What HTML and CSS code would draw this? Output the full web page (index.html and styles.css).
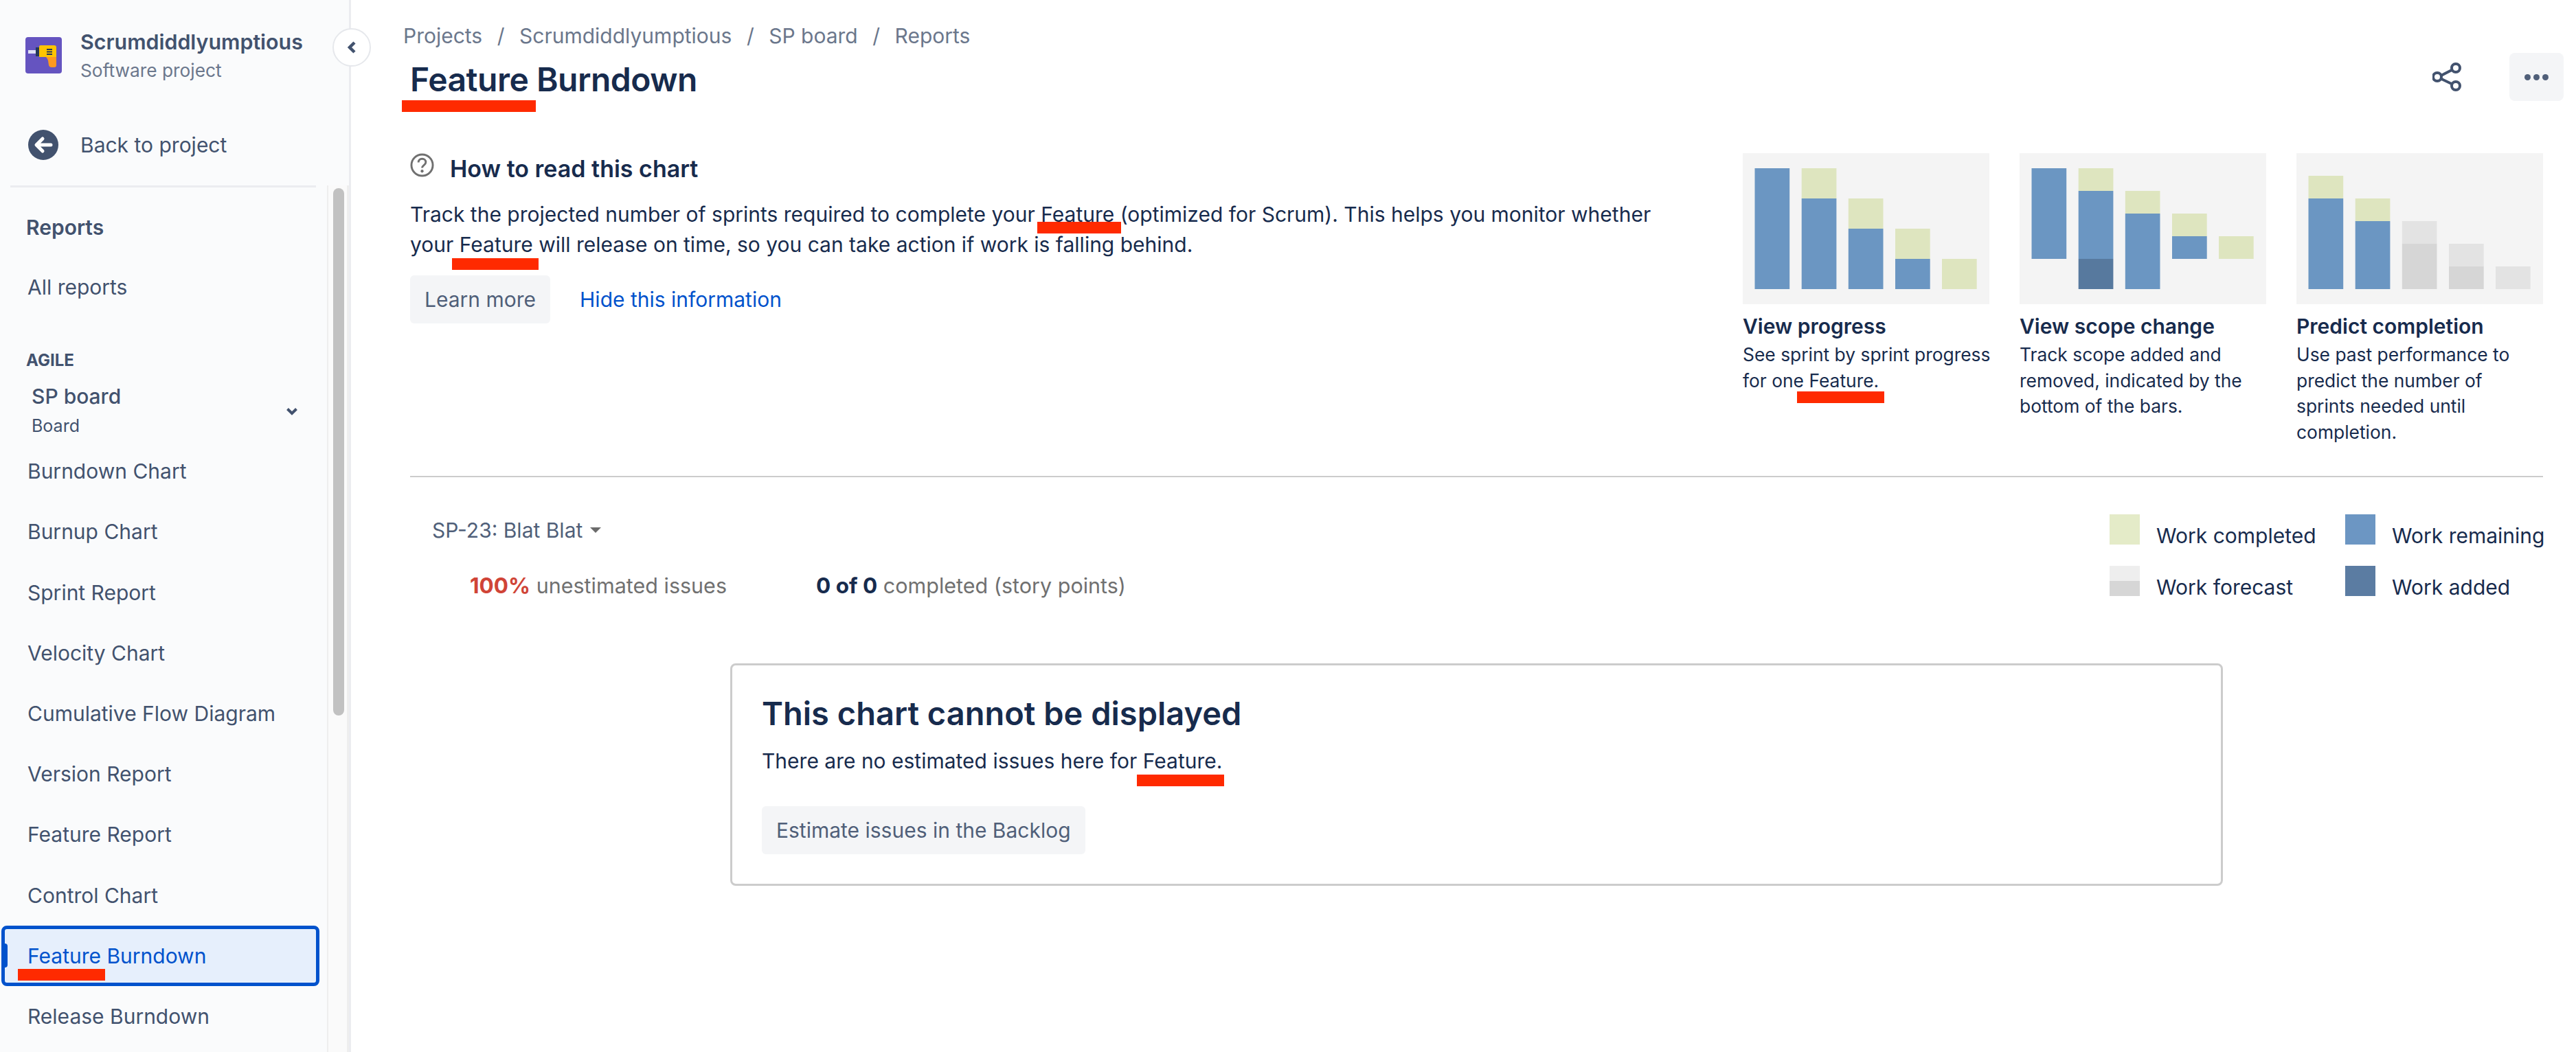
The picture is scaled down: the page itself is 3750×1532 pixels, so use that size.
FILE: index.html
```html
<!DOCTYPE html>
<html lang="en">
<head>
  <meta charset="UTF-8" />
  <title>Feature Burndown</title>
  <link rel="stylesheet" href="styles.css">
</head>
<body>

  <aside class="sidebar">
    <div class="project">
      <svg class="project-logo" viewBox="0 0 53 53">
        <rect width="53" height="53" rx="4" fill="#6554C0"/>
        <rect x="4" y="19" width="11" height="5" fill="#DFE1F5"/>
        <rect x="15" y="15" width="6" height="13" fill="#253858"/>
        <path d="M20 14q0-2 2-2h20q3 0 3 3v14H20z" fill="#FFC400"/>
        <path d="M30 29h15v12q0 3-3 3h-4q-3 0-4-3l-1-7q-1-3-3-5z" fill="#FF991F"/>
        <path d="M31 17h8v2h-8zM31 20.500h8v2h-8zM31 24h8v2h-8z" fill="#253858"/>
      </svg>
      <div>
        <div class="project-name">Scrumdiddlyumptious</div>
        <div class="project-type">Software project</div>
      </div>
    </div>

    <a class="back-link" href="#">
      <svg class="back-icon" viewBox="0 0 44 44">
        <circle cx="22" cy="22" r="22" fill="#42526E"/>
        <path d="M33 22H13M21 13l-9 9 9 9" fill="none" stroke="#fff" stroke-width="5" stroke-linejoin="round" stroke-linecap="round"/>
      </svg>
      Back to project
    </a>

    <div class="nav-wrap">
      <nav class="nav">
        <div class="nav-rule"></div>
        <div class="nav-title">Reports</div>
        <a class="nav-item nav-item-first" href="#">All reports</a>
        <div class="nav-group">AGILE</div>
        <div class="board">
          <div>
            <div class="board-name">SP board</div>
            <div class="board-type">Board</div>
          </div>
          <svg class="board-chevron" viewBox="0 0 18 12">
            <path d="M2.500 2.500L9 9l6.500-6.500" fill="none" stroke="#42526E" stroke-width="4"/>
          </svg>
        </div>
        <a class="nav-item" href="#">Burndown Chart</a>
        <a class="nav-item" href="#">Burnup Chart</a>
        <a class="nav-item" href="#">Sprint Report</a>
        <a class="nav-item" href="#">Velocity Chart</a>
        <a class="nav-item" href="#">Cumulative Flow Diagram</a>
        <a class="nav-item" href="#">Version Report</a>
        <a class="nav-item" href="#">Feature Report</a>
        <a class="nav-item" href="#">Control Chart</a>
        <a class="nav-item active" href="#"><span class="mark mark-nav">Feature</span> Burndown</a>
        <a class="nav-item" href="#">Release Burndown</a>
      </nav>
      <div class="scroll-track"><div class="scroll-thumb"></div></div>
    </div>

    <button class="collapse-button">
      <svg viewBox="0 0 16 20" width="16" height="20">
        <path d="M12 3L5 10l7 7" fill="none" stroke="#42526E" stroke-width="4.500"/>
      </svg>
    </button>
  </aside>

  <main class="main">
    <div class="breadcrumbs">
      <a href="#">Projects</a><span>/</span>
      <a href="#">Scrumdiddlyumptious</a><span>/</span>
      <a href="#">SP board</a><span>/</span>
      <a href="#">Reports</a>
    </div>

    <header class="page-header">
      <h1><span class="mark mark-title">Feature</span> Burndown</h1>
      <div class="actions">
        <button class="icon-button">
          <svg viewBox="0 0 42 42" width="42" height="42">
            <path d="M34 8L8 21.500 34 34" fill="none" stroke="#42526E" stroke-width="4"/>
            <circle cx="34" cy="8" r="6" fill="#fff" stroke="#42526E" stroke-width="4"/>
            <circle cx="7" cy="21" r="6" fill="#fff" stroke="#42526E" stroke-width="4"/>
            <circle cx="34" cy="34" r="6" fill="#fff" stroke="#42526E" stroke-width="4"/>
          </svg>
        </button>
        <button class="more-button"><i></i><i></i><i></i></button>
      </div>
    </header>

    <section class="info">
      <div class="info-text">
        <div class="info-heading">
          <svg class="help-icon" viewBox="0 0 36 36">
            <circle cx="18" cy="18" r="16" fill="none" stroke="#707070" stroke-width="3"/>
            <path d="M12.500 14c0-3.500 2.500-5.500 5.500-5.500s5.500 2 5.500 5c0 4.500-5.500 4.500-5.500 8.500" fill="none" stroke="#707070" stroke-width="3"/>
            <circle cx="18" cy="27" r="2.200" fill="#707070"/>
          </svg>
          <h2>How to read this chart</h2>
        </div>
        <p>Track the projected number of sprints required to complete your <span class="mark mark-para">Feature</span> (optimized for Scrum). This helps you monitor whether your <span class="mark mark-para-second">Feature</span> will release on time, so you can take action if work is falling behind.</p>
        <div class="info-actions">
          <button class="button">Learn more</button>
          <a class="link" href="#">Hide this information</a>
        </div>
      </div>

      <div class="cards">
        <div class="card">
          <svg class="thumb" viewBox="0 0 359 220">
            <g class="bar-blue">
              <rect x="17.500" y="22" width="50.700" height="176"/>
              <rect x="85.700" y="66" width="50.700" height="132"/>
              <rect x="153.800" y="110" width="50.700" height="88"/>
              <rect x="222" y="154" width="50.700" height="44"/>
            </g>
            <g class="bar-green">
              <rect x="85.700" y="22" width="50.700" height="44"/>
              <rect x="153.800" y="66" width="50.700" height="44"/>
              <rect x="222" y="110" width="50.700" height="44"/>
              <rect x="290" y="154" width="50.700" height="44"/>
            </g>
          </svg>
          <h3>View progress</h3>
          <p>See sprint by sprint progress<br>for one <span class="mark mark-card">Feature.</span></p>
        </div>
        <div class="card">
          <svg class="thumb" viewBox="0 0 359 220">
            <g class="bar-blue">
              <rect x="17.500" y="22" width="50.700" height="132"/>
              <rect x="85.700" y="55" width="50.700" height="99"/>
              <rect x="153.800" y="88" width="50.700" height="110"/>
              <rect x="222" y="121" width="50.700" height="33"/>
            </g>
            <g class="bar-green">
              <rect x="85.700" y="22" width="50.700" height="33"/>
              <rect x="153.800" y="55" width="50.700" height="33"/>
              <rect x="222" y="88" width="50.700" height="33"/>
              <rect x="290" y="121" width="50.700" height="33"/>
            </g>
            <rect class="bar-dark" x="85.700" y="154" width="50.700" height="44"/>
          </svg>
          <h3>View scope change</h3>
          <p>Track scope added and<br>removed, indicated by the<br>bottom of the bars.</p>
        </div>
        <div class="card">
          <svg class="thumb" viewBox="0 0 359 220">
            <g class="bar-blue">
              <rect x="17.500" y="66" width="50.700" height="132"/>
              <rect x="85.700" y="99" width="50.700" height="99"/>
            </g>
            <g class="bar-green">
              <rect x="17.500" y="33" width="50.700" height="33"/>
              <rect x="85.700" y="66" width="50.700" height="33"/>
            </g>
            <g class="bar-light">
              <rect x="153.800" y="99" width="50.700" height="33"/>
              <rect x="222" y="132" width="50.700" height="33"/>
              <rect x="290" y="165" width="50.700" height="33"/>
            </g>
            <g class="bar-grey">
              <rect x="153.800" y="132" width="50.700" height="66"/>
              <rect x="222" y="165" width="50.700" height="33"/>
            </g>
          </svg>
          <h3>Predict completion</h3>
          <p>Use past performance to<br>predict the number of<br>sprints needed until<br>completion.</p>
        </div>
      </div>
    </section>

    <hr class="divider">

    <section class="summary">
      <div class="summary-left">
        <div class="epic-select">SP-23: Blat Blat <span class="caret"></span></div>
        <div class="stats">
          <div class="stat"><strong class="stat-red">100%</strong> unestimated issues</div>
          <div class="stat"><strong>0 of 0</strong> completed (story points)</div>
        </div>
      </div>
      <div class="legend">
        <div class="legend-item"><span class="swatch swatch-completed"></span><span class="legend-label">Work completed</span></div>
        <div class="legend-item"><span class="swatch swatch-remaining"></span><span class="legend-label">Work remaining</span></div>
        <div class="legend-item"><span class="swatch swatch-forecast"></span><span class="legend-label">Work forecast</span></div>
        <div class="legend-item"><span class="swatch swatch-added"></span><span class="legend-label">Work added</span></div>
      </div>
    </section>

    <section class="empty-box">
      <h2>This chart cannot be displayed</h2>
      <p>There are no estimated issues here for <span class="mark mark-box">Feature.</span></p>
      <button class="button">Estimate issues in the Backlog</button>
    </section>
  </main>

</body>
</html>
```

FILE: styles.css
```css
* { margin: 0; padding: 0; box-sizing: border-box; }

body {
  font-family: Inter, 'Noto Sans', sans-serif;
  font-size: 30px;
  color: #172B4D;
  background-color: #fff;
  display: flex;
  height: 100vh;
  overflow: hidden;
}

a { text-decoration: none; color: inherit; }

button {
  font-family: inherit;
  border: none;
  cursor: pointer;
}

/* red annotation strokes drawn over the screenshot */
.mark, .mark-para-second { position: relative; }

.mark::after, .mark-para-second::after {
  content: '';
  position: absolute;
  height: 17px;
  background-color: #FF2A00;
}

.mark-nav::after { left: -14px; width: 127px; top: 37px; }
.mark-title::after { left: -12px; width: 195px; top: 60px; }
.mark-para::after { left: -5px; width: 122px; top: 29px; }
.mark-para-second::after { left: -11px; width: 126px; top: 38px; }
.mark-card::after { left: -17px; width: 127px; top: 32px; }
.mark-box::after { left: -9px; width: 127px; top: 38px; }

/* sidebar */
.sidebar {
  position: relative;
  flex: 0 0 511px;
  height: 100%;
  background-color: #FAFBFC;
  border-right: 3px solid #EBECF0;
  display: flex;
  flex-direction: column;
  color: #42526E;
}

.project {
  display: flex;
  align-items: center;
  gap: 27px;
  padding: 41px 0 0 37px;
}

.project-logo {
  width: 53px;
  height: 53px;
  margin-top: -4px;
}

.project-name {
  font-size: 30.4px;
  line-height: 41px;
  font-weight: 600;
}

.project-type {
  font-size: 26.3px;
  line-height: 41px;
  color: #6B778C;
}

.back-link {
  display: flex;
  align-items: center;
  gap: 32px;
  margin-top: 66px;
  padding-left: 41px;
  line-height: 44px;
}

.back-icon { width: 44px; height: 44px; }

.nav-wrap {
  flex: 1;
  display: flex;
  margin-top: 37px;
  min-height: 0;
}

.nav { flex: 0 0 476px; }

.nav-rule {
  height: 3px;
  margin: 0 16px 0 15px;
  background-color: #EBECF0;
}

.nav-title {
  margin: 36px 0 0 38px;
  line-height: 44px;
  font-weight: 600;
}

.nav-item {
  display: block;
  height: 88.2px;
  line-height: 88.2px;
  padding-left: 40px;
}

.nav-item-first { margin-top: 21px; }

.nav-group {
  margin: 48px 0 0 38px;
  font-size: 24px;
  line-height: 30px;
  font-weight: 700;
}

.board {
  display: flex;
  align-items: center;
  justify-content: space-between;
  margin: 16px 42px 0 46px;
}

.board-name {
  line-height: 43px;
  font-weight: 500;
}

.board-type {
  font-size: 25px;
  line-height: 43px;
}

.board-chevron { width: 18px; height: 12px; }

.active {
  position: relative;
  width: 463px;
  margin-left: 2px;
  padding-left: 33px;
  line-height: 78px;
  color: #0052CC;
  background-color: #E6EFFC;
  border: 5px solid #0052CC;
  border-radius: 8px;
}

.active::before {
  content: '';
  position: absolute;
  left: -2px;
  top: 21px;
  width: 6px;
  height: 35px;
  background-color: #0052CC;
  border-radius: 0 4px 4px 0;
}

.scroll-track {
  flex: 1;
  border-left: 2px solid #EEE;
  border-right: 3px solid #EEE;
  background-color: #FAFAFA;
  padding: 4px 0 0 7px;
}

.scroll-thumb {
  width: 16px;
  height: 768px;
  background-color: #C1C1C1;
  border-radius: 8px;
}

.collapse-button {
  position: absolute;
  top: 41px;
  left: 484px;
  width: 56px;
  height: 56px;
  border-radius: 50%;
  background-color: #fff;
  border: 2px solid #E6E8EC;
  display: flex;
  align-items: center;
  justify-content: center;
}

/* main column */
.main {
  flex: 1;
  padding: 32px 48px 0 86px;
  min-width: 0;
}

.breadcrumbs {
  display: flex;
  gap: 21.5px;
  margin-left: -10px;
  line-height: 40px;
  color: #6B778C;
}

.page-header {
  display: flex;
  justify-content: space-between;
  margin: 14px -30px 0 0;
}

h1 {
  font-size: 48px;
  line-height: 60px;
  font-weight: 600;
  letter-spacing: -0.5px;
}

.actions {
  display: flex;
  align-items: center;
  gap: 70px;
  margin-top: -9px;
}

.icon-button {
  display: flex;
  background: none;
}

.more-button {
  width: 79px;
  height: 70px;
  display: flex;
  align-items: center;
  justify-content: center;
  gap: 4px;
  background-color: #F4F5F7;
  border-radius: 8px;
}

.more-button i {
  width: 9px;
  height: 9px;
  background-color: #505F79;
  border-radius: 50%;
}

.info {
  display: flex;
  justify-content: space-between;
  margin-top: 76px;
}

.info-text { width: 1830px; }

.info-heading {
  display: flex;
  gap: 23px;
}

.help-icon { width: 35px; height: 35px; flex: none; }

.info-heading h2 {
  font-size: 34px;
  line-height: 46px;
  font-weight: 600;
}

.info-text p {
  margin-top: 21px;
  line-height: 44px;
}

.info-actions {
  display: flex;
  align-items: center;
  gap: 43px;
  margin-top: 23px;
}

.button {
  height: 70px;
  padding: 0 21px;
  font-size: 30px;
  color: #505F79;
  background-color: #F4F5F7;
  border-radius: 6px;
}

.link { color: #0052CC; }

.cards {
  display: flex;
  gap: 44px;
}

.card { width: 359px; }

.thumb {
  display: block;
  width: 359px;
  height: 220px;
  background-color: #F4F4F4;
}

.bar-blue { fill: #6B96C2; }
.bar-green { fill: #DEE5BF; }
.bar-dark { fill: #57799E; }
.bar-light { fill: #E3E3E3; }
.bar-grey { fill: #D6D6D6; }

.card h3 {
  margin-top: 13px;
  font-size: 30px;
  line-height: 38px;
  font-weight: 600;
}

.card p {
  margin-top: 4px;
  font-size: 26.4px;
  line-height: 37.7px;
  white-space: nowrap;
}

.divider {
  border: none;
  height: 2px;
  margin-top: 44px;
  background-color: #CCC;
}

.summary {
  display: flex;
  justify-content: space-between;
}

.summary-left {
  margin: 57px 0 0 32px;
}

.epic-select {
  line-height: 40px;
  font-size: 30px;
  color: #505F79;
}

.caret {
  display: inline-block;
  margin-left: 2px;
  vertical-align: 7px;
  border-left: 8px solid transparent;
  border-right: 8px solid transparent;
  border-top: 8px solid #6B6B6B;
}

.stats {
  display: flex;
  gap: 130px;
  margin: 41px 0 0 55px;
  font-size: 30.5px;
  line-height: 40px;
  color: #707070;
}

.stat strong {
  font-size: 31.5px;
  font-weight: 700;
  color: #172B4D;
}

.stat .stat-red { color: #D04437; }

.legend {
  display: grid;
  grid-template-columns: 343px 288px;
  row-gap: 24px;
  margin-top: 54px;
}

.legend-item {
  display: flex;
  gap: 24px;
}

.legend-label {
  margin-top: 11px;
  line-height: 40px;
  white-space: nowrap;
}

.swatch {
  flex: 0 0 44px;
  height: 44px;
}

.swatch-completed { background-color: #E4EBC8; }
.swatch-remaining { background-color: #6C96C3; }
.swatch-added { background-color: #5B7CA2; }
.swatch-forecast { background: linear-gradient(#EEE 50%, #D6D6D6 50%); }

.empty-box {
  width: 2173px;
  margin: 91px 0 0 466px;
  padding: 40px 43px 43px;
  border: 3px solid #CCC;
  border-radius: 8px;
}

.empty-box h2 {
  font-size: 47px;
  line-height: 60px;
  font-weight: 600;
}

.empty-box p {
  margin: 17px 0 44px;
  line-height: 44px;
}
```
